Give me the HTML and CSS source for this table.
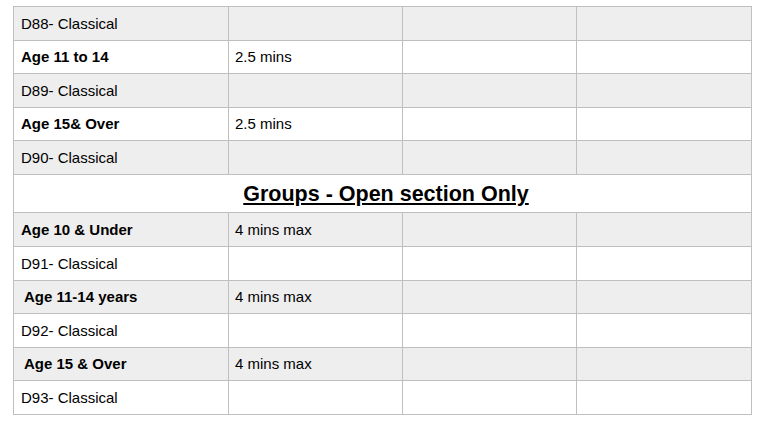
FILE: index.html
```html
<!DOCTYPE html>
<html>
<head>
<meta charset="utf-8">
<link rel="stylesheet" href="styles.css">
</head>
<body>
<div class="table">
  <div class="row grey h34"><div class="cell">D88- Classical</div><div class="cell"></div><div class="cell"></div><div class="cell"></div></div>
  <div class="row h33"><div class="cell b">Age 11 to 14</div><div class="cell">2.5 mins</div><div class="cell"></div><div class="cell"></div></div>
  <div class="row grey h34"><div class="cell">D89- Classical</div><div class="cell"></div><div class="cell"></div><div class="cell"></div></div>
  <div class="row h33"><div class="cell b">Age 15&amp; Over</div><div class="cell">2.5 mins</div><div class="cell"></div><div class="cell"></div></div>
  <div class="row grey h34"><div class="cell">D90- Classical</div><div class="cell"></div><div class="cell"></div><div class="cell"></div></div>
  <div class="row head"><div class="cell title">Groups - Open section Only</div></div>
  <div class="row grey h34"><div class="cell b">Age 10 &amp; Under</div><div class="cell">4 mins max</div><div class="cell"></div><div class="cell"></div></div>
  <div class="row h34"><div class="cell">D91- Classical</div><div class="cell"></div><div class="cell"></div><div class="cell"></div></div>
  <div class="row grey h33"><div class="cell b ind">Age 11-14 years</div><div class="cell">4 mins max</div><div class="cell"></div><div class="cell"></div></div>
  <div class="row h34"><div class="cell">D92- Classical</div><div class="cell"></div><div class="cell"></div><div class="cell"></div></div>
  <div class="row grey h33"><div class="cell b ind">Age 15 &amp; Over</div><div class="cell">4 mins max</div><div class="cell"></div><div class="cell"></div></div>
  <div class="row h34"><div class="cell">D93- Classical</div><div class="cell"></div><div class="cell"></div><div class="cell"></div></div>
</div>
</body>
</html>
```
FILE: styles.css
```css
html, body {
  margin: 0;
  padding: 0;
  background: #ffffff;
}
body {
  font-family: "Liberation Sans", Arial, sans-serif;
  font-size: 15px;
  color: #000000;
}
.table {
  margin: 6px 0 0 13px;
  width: 739px;
  border-top: 1px solid #bfbfbf;
  border-left: 1px solid #bfbfbf;
  box-sizing: border-box;
}
.row {
  display: grid;
  grid-template-columns: 215px 174px 174px 175px;
}
.row.head {
  grid-template-columns: 738px;
  height: 38px;
}
.h34 { height: 34px; }
.h33 { height: 33px; }
.grey { background: #eeeeee; }
.cell {
  box-sizing: border-box;
  border-right: 1px solid #bfbfbf;
  border-bottom: 1px solid #bfbfbf;
  padding-left: 6px;
  padding-bottom: 1px;
  display: flex;
  align-items: center;
  white-space: nowrap;
}
.row > .cell:first-child { padding-left: 7px; }
.row > .cell.ind { padding-left: 10px; }
.b { font-weight: bold; }
.title {
  justify-content: center;
  font-weight: bold;
  font-size: 21.5px;
  text-decoration: underline;
  padding-top: 2px;
  padding-bottom: 0;
}
```
